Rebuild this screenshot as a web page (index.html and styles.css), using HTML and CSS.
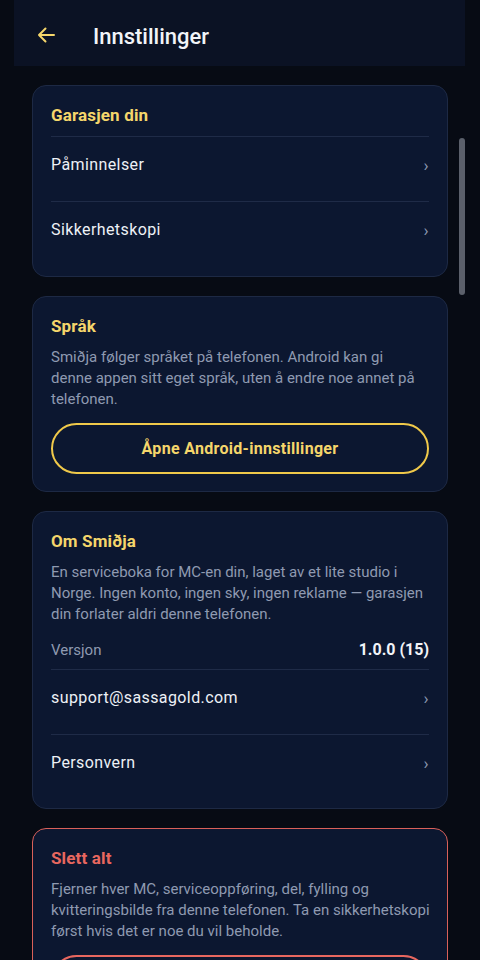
FILE: index.html
```html
<!DOCTYPE html>
<html lang="nb">
<head>
  <meta charset="UTF-8">
  <meta name="viewport" content="width=device-width, initial-scale=1.0">
  <title>Innstillinger</title>
  <link rel="stylesheet" href="styles.css">
</head>
<body>
  <div class="screen">
    <div class="topbar">
      <svg class="back" width="20" height="20" viewBox="0 0 20 20" aria-hidden="true">
        <path d="M18 10H3M9.5 3.5L3 10l6.5 6.5" fill="none" stroke="#f5d66b" stroke-width="2" stroke-linecap="round" stroke-linejoin="round"/>
      </svg>
      <h1>Innstillinger</h1>
    </div>

    <div class="content">
      <div class="card">
        <h2 class="card-title">Garasjen din</h2>
        <div class="divider"></div>
        <div class="row">
          <span>Påminnelser</span>
          <span class="chevron">›</span>
        </div>
        <div class="divider"></div>
        <div class="row">
          <span>Sikkerhetskopi</span>
          <span class="chevron">›</span>
        </div>
      </div>

      <div class="card card-text">
        <h2 class="card-title">Språk</h2>
        <p class="desc">Smiðja følger språket på telefonen. Android kan gi<br>denne appen sitt eget språk, uten å endre noe annet på<br>telefonen.</p>
        <button class="btn">Åpne Android-innstillinger</button>
      </div>

      <div class="card card-about">
        <h2 class="card-title">Om Smiðja</h2>
        <p class="desc">En serviceboka for MC-en din, laget av et lite studio i<br>Norge. Ingen konto, ingen sky, ingen reklame — garasjen<br>din forlater aldri denne telefonen.</p>
        <div class="version">
          <span class="label">Versjon</span>
          <span class="value">1.0.0 (15)</span>
        </div>
        <div class="divider"></div>
        <div class="row">
          <span>support@sassagold.com</span>
          <span class="chevron">›</span>
        </div>
        <div class="divider"></div>
        <div class="row">
          <span>Personvern</span>
          <span class="chevron">›</span>
        </div>
      </div>

      <div class="card card-text card-danger">
        <h2 class="card-title">Slett alt</h2>
        <p class="desc">Fjerner hver MC, serviceoppføring, del, fylling og<br>kvitteringsbilde fra denne telefonen. Ta en sikkerhetskopi<br>først hvis det er noe du vil beholde.</p>
        <button class="btn btn-danger">Slett alt</button>
      </div>
    </div>

    <div class="scrollbar"></div>
  </div>
</body>
</html>
```

FILE: styles.css
```css
body {
  font-family: Roboto, "Noto Sans", sans-serif;
  margin: 0;
  padding: 0;
  background-color: #070b14;
  color: #e8ecf3;
}

.screen {
  position: relative;
  height: 960px;
  overflow: hidden;
}

.topbar {
  margin: 0 15px 0 14px;
  height: 66px;
  background-color: #0b1224;
  display: flex;
  align-items: center;
}

.back {
  margin-left: 22px;
  margin-top: 4px;
}

.topbar h1 {
  margin: 0 0 0 37px;
  font-size: 22px;
  font-weight: 500;
  color: #f2f4f8;
  padding-top: 6px;
}

.content {
  padding: 19px 32px 0 32px;
}

.card {
  background-color: #0c1730;
  border: 1px solid #1d2944;
  border-radius: 14px;
  padding: 18px 18px 10px 18px;
  margin-bottom: 19px;
}

.card-about {
  padding-bottom: 9px;
}

.card-text {
  padding-bottom: 17px;
}

.card-title {
  margin: 0;
  font-size: 17px;
  line-height: 22px;
  font-weight: 700;
  letter-spacing: 0.15px;
  color: #f5d66b;
  padding-bottom: 10px;
}

.card-danger {
  border-color: #d9605a;
}

.card-danger .card-title {
  color: #e8675f;
}

.divider {
  height: 1px;
  background-color: #1f2b47;
}

.row {
  display: flex;
  justify-content: space-between;
  align-items: center;
  font-size: 16px;
  line-height: 22px;
  letter-spacing: 0.4px;
  padding: 17px 0 25px 0;
  color: #eef1f6;
}

.chevron {
  color: #8e9ab3;
  font-size: 17px;
  line-height: 22px;
}

.desc {
  margin: 0;
  font-size: 15px;
  line-height: 21px;
  white-space: nowrap;
  color: #8f9ab1;
}

.version {
  display: flex;
  justify-content: space-between;
  align-items: center;
  line-height: 22px;
  padding: 14px 0 8px 0;
}

.version .label {
  font-size: 15px;
  color: #8f9ab1;
}

.version .value {
  font-size: 16px;
  font-weight: 700;
  color: #f2f4f8;
}

.btn {
  display: block;
  width: 100%;
  height: 51px;
  margin-top: 13px;
  border: 2px solid #f0c94a;
  border-radius: 26px;
  background-color: transparent;
  color: #f5d66b;
  font-family: Roboto, "Noto Sans", sans-serif;
  font-size: 16px;
  font-weight: 700;
  letter-spacing: 0.3px;
  cursor: pointer;
}

.btn-danger {
  border-color: #e8675f;
  color: #e8675f;
}

.scrollbar {
  position: absolute;
  left: 459px;
  top: 138px;
  width: 6px;
  height: 157px;
  border-radius: 3px;
  background-color: #5b606b;
}
```
